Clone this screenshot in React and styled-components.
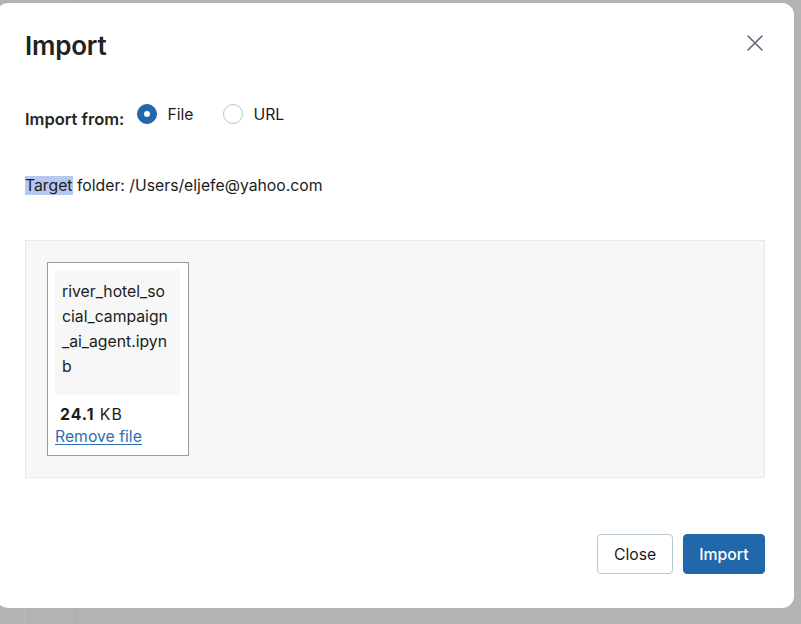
import React from "react";
import styled, { createGlobalStyle } from "styled-components";

const Global = createGlobalStyle`
  html, body { margin: 0; padding: 0; }
  body {
    background: #b3b3b3;
    font-family: Inter, "Noto Sans", "Liberation Sans", sans-serif;
    color: #1c1c1c;
    overflow: hidden;
  }
`;

const Backdrop = styled.div`
  width: 801px;
  height: 624px;
  background-color: #b3b3b3;
  background-image:
    linear-gradient(to right, transparent 25px, #bdbdbd 25px, #bdbdbd 26px, transparent 26px),
    linear-gradient(to right, transparent 76px, #a9a9a9 76px, #a9a9a9 77px, transparent 77px);
  padding-top: 3px;
  box-sizing: border-box;
  overflow: hidden;
`;

const Dialog = styled.div`
  margin-left: -4px;
  width: 798px;
  height: 605px;
  box-sizing: border-box;
  background: #fff;
  border-radius: 12px;
  padding: 25px 29px 34px;
  display: flex;
  flex-direction: column;
`;

const Header = styled.div`
  display: flex;
  align-items: flex-start;
  justify-content: space-between;
  height: 36px;
`;

const Title = styled.h2`
  margin: 0;
  font-size: 26px;
  line-height: 36px;
  font-weight: 600;
  color: #222;
  letter-spacing: -0.2px;
`;

const CloseIcon = styled.button`
  border: 0;
  background: none;
  padding: 0;
  width: 16px;
  height: 16px;
  margin: 7px 2px 0 0;
  display: flex;
  color: #5b6775;
`;

const SourceRow = styled.div`
  display: flex;
  align-items: center;
  margin-top: 38px;
  height: 24px;
`;

const FieldLabel = styled.span`
  font-size: 16.5px;
  font-weight: 600;
  color: #262626;
  margin-right: 13px;
  transform: translateY(5px);
`;

const RadioOption = styled.label`
  display: flex;
  align-items: center;
  gap: 10px;
  font-size: 15.75px;
  margin-right: 30px;
  color: #1c1c1c;
`;

const RadioDot = styled.span`
  width: 20px;
  height: 20px;
  box-sizing: border-box;
  border-radius: 50%;
  border: 1px solid ${(p) => (p.$checked ? "#2167a9" : "#b9c6d2")};
  background: ${(p) => (p.$checked ? "#2167a9" : "#fff")};
  display: flex;
  align-items: center;
  justify-content: center;
  &::after {
    content: "";
    width: 6px;
    height: 6px;
    border-radius: 50%;
    background: #fff;
    display: ${(p) => (p.$checked ? "block" : "none")};
  }
`;

const TargetLine = styled.p`
  margin: 47px 0 0;
  font-size: 15.75px;
  line-height: 25px;
  color: #1c1c1c;
`;

const Highlight = styled.span`
  background: #b4c8f0;
`;

const DropZone = styled.div`
  margin-top: 42px;
  height: 238px;
  box-sizing: border-box;
  background: #f7f7f7;
  border: 1px solid #e8e8e8;
  padding: 21px;
  display: flex;
  align-items: flex-start;
`;

const FileCard = styled.div`
  width: 142px;
  height: 194px;
  box-sizing: border-box;
  background: #fff;
  border: 1px solid #9c9c9c;
  padding: 7px 8px 0 7px;
  display: flex;
  flex-direction: column;
`;

const FileName = styled.div`
  height: 125px;
  flex-shrink: 0;
  box-sizing: border-box;
  background: #f7f7f7;
  padding: 9px 6px 8px 7px;
  font-size: 15.75px;
  line-height: 25px;
  word-break: break-all;
  color: #1c1c1c;
`;

const FileSize = styled.div`
  margin-top: 8px;
  padding-left: 5px;
  font-size: 15.75px;
  line-height: 23px;
  letter-spacing: 1px;
  color: #1c1c1c;
  b { font-weight: 700; }
`;

const RemoveLink = styled.a`
  font-size: 15.75px;
  line-height: 22px;
  color: #2b6fb6;
  text-decoration: underline;
  text-underline-offset: 2px;
  cursor: pointer;
`;

const Footer = styled.div`
  margin-top: auto;
  display: flex;
  justify-content: flex-end;
  gap: 10px;
`;

const Button = styled.button`
  height: 40px;
  box-sizing: border-box;
  padding: 0 ${(p) => (p.$primary ? "15.5px" : "15.5px")};
  border-radius: 4px;
  font-family: inherit;
  font-size: 15.75px;
  font-weight: ${(p) => (p.$primary ? 500 : 400)};
  border: 1px solid ${(p) => (p.$primary ? "#2167a9" : "#b6c8d6")};
  background: ${(p) => (p.$primary ? "#2167a9" : "#fff")};
  color: ${(p) => (p.$primary ? "#fff" : "#1c1c1c")};
  cursor: pointer;
`;

export default function App() {
  return (
    <>
      <Global />
      <Backdrop>
        <Dialog>
          <Header>
            <Title>Import</Title>
            <CloseIcon aria-label="Close">
              <svg width="16" height="16" viewBox="0 0 16 16" fill="none">
                <path d="M1 1L15 15M15 1L1 15" stroke="currentColor" strokeWidth="1.6" strokeLinecap="round" />
              </svg>
            </CloseIcon>
          </Header>
          <SourceRow>
            <FieldLabel>Import from:</FieldLabel>
            <RadioOption>
              <RadioDot $checked />
              File
            </RadioOption>
            <RadioOption>
              <RadioDot />
              URL
            </RadioOption>
          </SourceRow>
          <TargetLine>
            <Highlight>Target</Highlight> folder: /Users/eljefe@yahoo.com
          </TargetLine>
          <DropZone>
            <FileCard>
              <FileName>river_hotel_social_campaign_ai_agent.ipynb</FileName>
              <FileSize>
                <b>24.1</b> KB
              </FileSize>
              <RemoveLink>Remove file</RemoveLink>
            </FileCard>
          </DropZone>
          <Footer>
            <Button>Close</Button>
            <Button $primary>Import</Button>
          </Footer>
        </Dialog>
      </Backdrop>
    </>
  );
}
